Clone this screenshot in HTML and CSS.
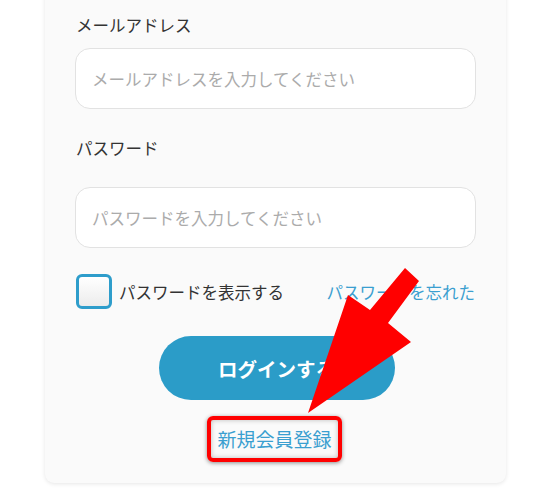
FILE: index.html
```html
<!DOCTYPE html>
<html lang="ja">
<head>
<meta charset="utf-8">
<title>ログイン</title>
<link rel="stylesheet" href="styles.css">
</head>
<body>
<div class="page">
  <form class="card">
    <label class="label label-email">メールアドレス</label>
    <input class="field" type="text" placeholder="メールアドレスを入力してください">
    <label class="label label-pass">パスワード</label>
    <input class="field" type="password" placeholder="パスワードを入力してください">
    <div class="row">
      <span class="check-wrap">
        <span class="checkbox"></span>
        <span class="check-text">パスワードを表示する</span>
      </span>
      <a class="link forgot">パスワードを忘れた</a>
    </div>
    <div class="btn-wrap">
      <button class="btn" type="button">ログインする</button>
    </div>
    <div class="register-wrap">
      <a class="link register">新規会員登録</a>
    </div>
  </form>
  <svg class="arrow" width="553" height="498" viewBox="0 0 553 498">
    <polygon points="405,268 419,281 388,323 411,342 308,413 348,295 370,310" fill="#ff0000"/>
  </svg>
</div>
</body>
</html>
```

FILE: styles.css
```css
* { box-sizing: border-box; }
html, body {
  margin: 0;
  padding: 0;
  background: #ffffff;
  font-family: "Noto Sans CJK JP", "Noto Sans", sans-serif;
}
.page {
  position: relative;
  width: 553px;
  height: 498px;
  overflow: hidden;
}
.card {
  margin: -20px 0 0 45px;
  width: 461px;
  background: #fafafa;
  border-radius: 9px;
  box-shadow: 0 1px 4px rgba(0,0,0,0.10);
  padding: 33px 30px 21px 30px;
  display: flex;
  flex-direction: column;
}
.label {
  display: block;
  font-size: 16.5px;
  line-height: 24px;
  color: #333333;
  padding-left: 1px;
}
.label-email { margin-bottom: 11px; }
.label-pass { margin-top: 27px; margin-bottom: 27px; }
.field {
  width: 401px;
  height: 61px;
  border: 1px solid #e2e2e2;
  border-radius: 15px;
  background: #ffffff;
  padding: 0 16px;
  font-family: inherit;
  font-size: 16.5px;
  color: #333;
  outline: none;
}
.field::placeholder { color: #ababab; }
.row {
  margin-top: 26px;
  display: flex;
  align-items: center;
  justify-content: space-between;
  height: 35px;
}
.check-wrap {
  display: flex;
  align-items: center;
  gap: 7px;
  padding-left: 1px;
}
.checkbox {
  width: 36px;
  height: 35px;
  border: 3px solid #2e9dcb;
  border-radius: 6px;
  background: linear-gradient(#ffffff, #ececec);
}
.check-text {
  font-size: 16.5px;
  color: #333333;
  line-height: 24px;
}
.link {
  color: #3a9fd0;
  text-decoration: none;
}
.forgot {
  font-size: 16.5px;
  line-height: 24px;
  margin-right: 1px;
}
.btn-wrap {
  margin-top: 27px;
  display: flex;
  justify-content: center;
}
.btn {
  width: 236px;
  height: 64px;
  border: none;
  border-radius: 32px;
  background: #2b9cc8;
  color: #ffffff;
  font-family: inherit;
  font-size: 19.5px;
  font-weight: bold;
  margin-left: 2px;
}
.register-wrap {
  margin-top: 16px;
  display: flex;
  justify-content: center;
}
.register {
  display: block;
  font-size: 19px;
  line-height: 26px;
  padding: 6px 6px;
  border: 4px solid #ff0000;
  border-radius: 6px;
  box-shadow: 0 1px 4px rgba(0,0,0,0.45), inset 0 0 5px rgba(0,0,0,0.25);
  margin-right: 2px;
}
.arrow {
  position: absolute;
  left: 0;
  top: 0;
  pointer-events: none;
}
```
